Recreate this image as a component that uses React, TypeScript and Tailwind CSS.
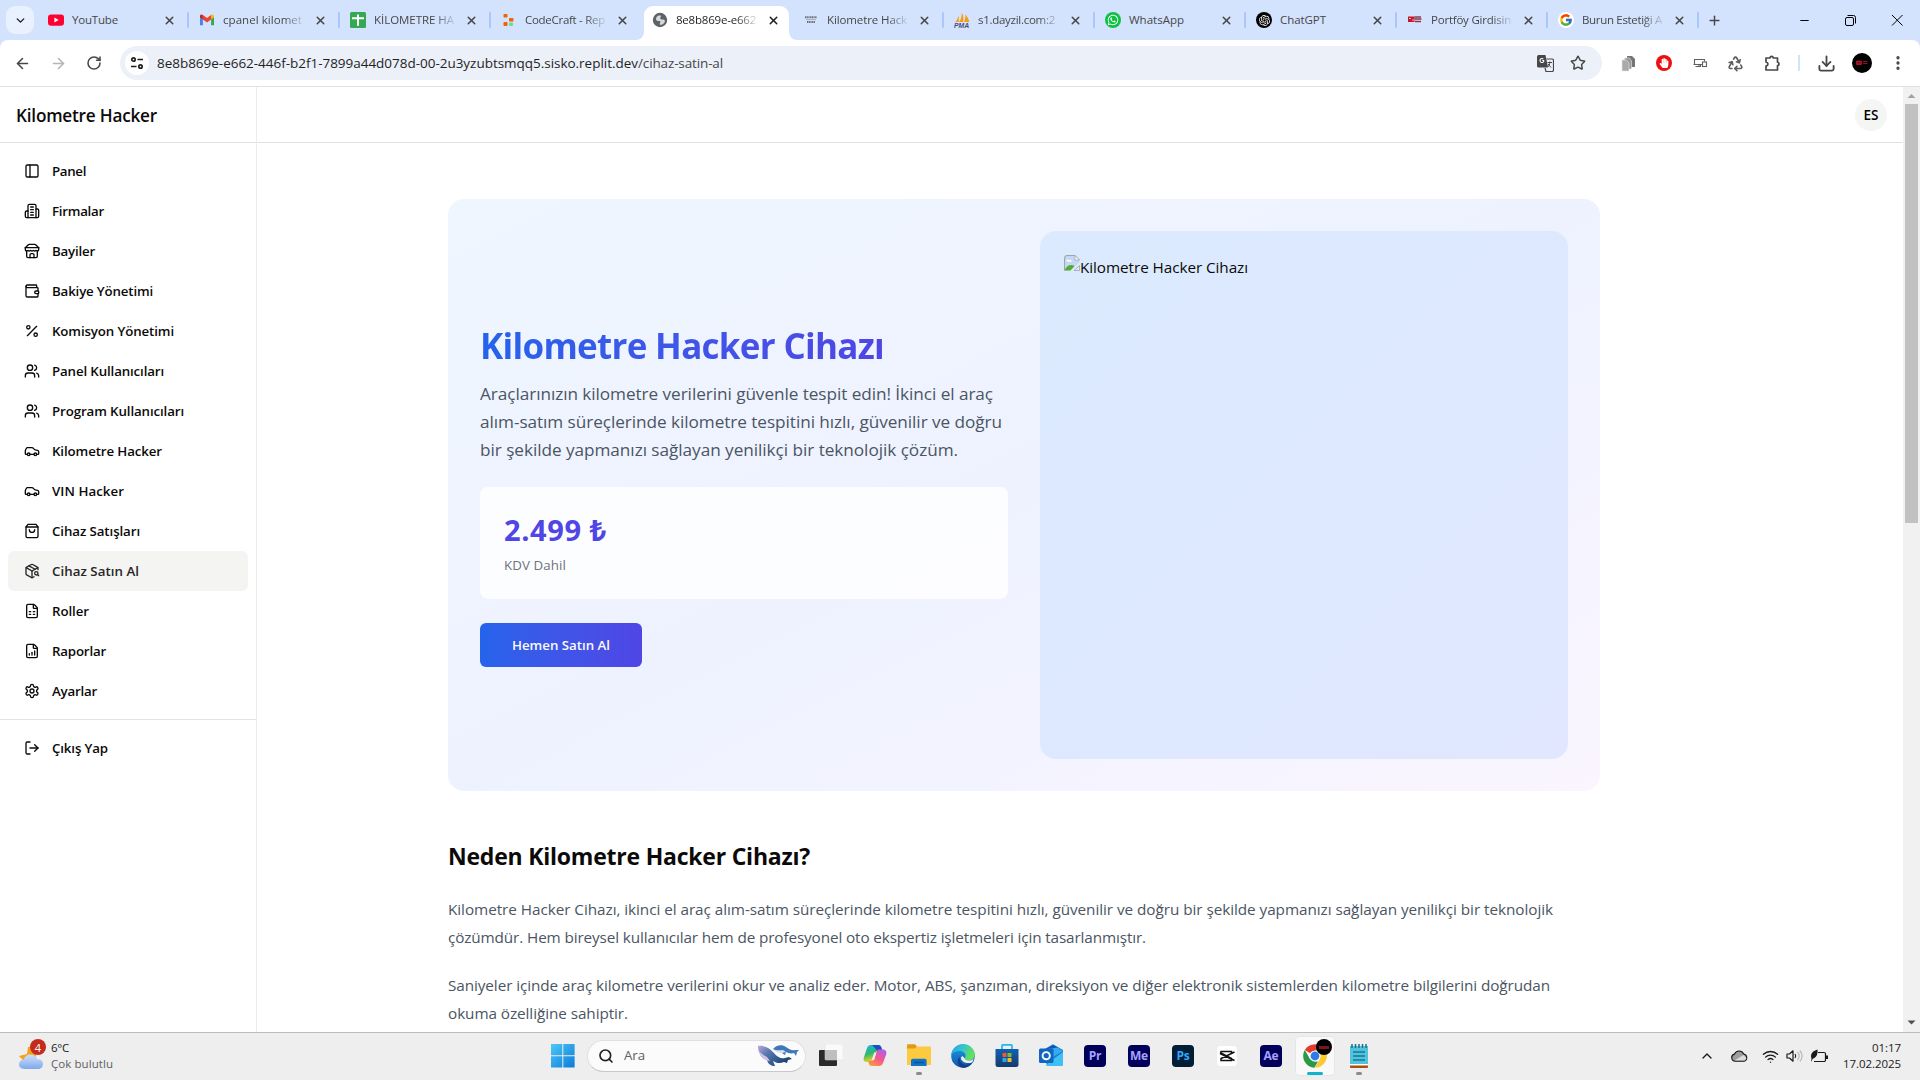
import React, { useLayoutEffect, useRef } from "react";
import {
  ArrowLeft, ArrowRight, RotateCw, X, Plus, Minus, Star, Download, EllipsisVertical, ChevronDown, ChevronUp,
  PanelLeft, Wallet, Percent, Users, Car, PackageSearch, FileSpreadsheet, FileChartColumnIncreasing,
  LogOut, Search, Wifi, Recycle,
} from "lucide-react";
import { FcGoogle } from "react-icons/fc";
import { SiOpenai } from "react-icons/si";
import { FaWhatsapp, FaHandPaper } from "react-icons/fa";

/** One line of text whose tracking is adjusted so that it spans `w` pixels. */
function Fit({ w, className = "", children }: { w: number; className?: string; children: string }) {
  const ref = useRef<HTMLSpanElement>(null);
  useLayoutEffect(() => {
    const el = ref.current;
    if (!el) return;
    el.style.letterSpacing = "0px";
    const natural = el.getBoundingClientRect().width;
    el.style.letterSpacing = `${(w - natural) / children.length}px`;
  }, [w, children]);
  return <span ref={ref} className={`inline-block whitespace-nowrap ${className}`}>{children}</span>;
}

const stroke = { fill: "none", stroke: "currentColor", strokeWidth: 2, strokeLinecap: "round", strokeLinejoin: "round" } as const;

const StoreIcon = () => (
  <svg width="16" height="16" viewBox="0 0 24 24" {...stroke}>
    <path d="m2 7 4.41-4.41A2 2 0 0 1 7.83 2h8.34a2 2 0 0 1 1.42.59L22 7" />
    <path d="M4 12v8a2 2 0 0 0 2 2h12a2 2 0 0 0 2-2v-8" />
    <path d="M15 22v-4a2 2 0 0 0-2-2h-2a2 2 0 0 0-2 2v4" />
    <path d="M2 7h20" />
    <path d="M22 7v3a2 2 0 0 1-2 2a2.7 2.7 0 0 1-1.59-.63.7.7 0 0 0-.82 0A2.7 2.7 0 0 1 16 12a2.7 2.7 0 0 1-1.59-.63.7.7 0 0 0-.82 0A2.7 2.7 0 0 1 12 12a2.7 2.7 0 0 1-1.59-.63.7.7 0 0 0-.82 0A2.7 2.7 0 0 1 8 12a2.7 2.7 0 0 1-1.59-.63.7.7 0 0 0-.82 0A2.7 2.7 0 0 1 4 12a2 2 0 0 1-2-2V7" />
  </svg>
);
const BuildingIcon = () => (
  <svg width="16" height="16" viewBox="0 0 24 24" {...stroke}>
    <path d="M6 22V4a2 2 0 0 1 2-2h8a2 2 0 0 1 2 2v18Z" />
    <path d="M6 12H4a2 2 0 0 0-2 2v6a2 2 0 0 0 2 2h2" />
    <path d="M18 9h2a2 2 0 0 1 2 2v9a2 2 0 0 1-2 2h-2" />
    <path d="M10 6h4M10 10h4M10 14h4M10 18h4" />
  </svg>
);
const BagIcon = () => (
  <svg width="16" height="16" viewBox="0 0 24 24" {...stroke}>
    <path d="M6 2 3 6v14a2 2 0 0 0 2 2h14a2 2 0 0 0 2-2V6l-3-4Z" />
    <path d="M3 6h18M16 10a4 4 0 0 1-8 0" />
  </svg>
);
const GearIcon = () => (
  <svg width="16" height="16" viewBox="0 0 24 24" {...stroke}>
    <path d="M12.22 2h-.44a2 2 0 0 0-2 2v.18a2 2 0 0 1-1 1.73l-.43.25a2 2 0 0 1-2 0l-.15-.08a2 2 0 0 0-2.73.73l-.22.38a2 2 0 0 0 .73 2.73l.15.1a2 2 0 0 1 1 1.72v.51a2 2 0 0 1-1 1.74l-.15.09a2 2 0 0 0-.73 2.73l.22.38a2 2 0 0 0 2.73.73l.15-.08a2 2 0 0 1 2 0l.43.25a2 2 0 0 1 1 1.73V20a2 2 0 0 0 2 2h.44a2 2 0 0 0 2-2v-.18a2 2 0 0 1 1-1.73l.43-.25a2 2 0 0 1 2 0l.15.08a2 2 0 0 0 2.73-.73l.22-.39a2 2 0 0 0-.73-2.73l-.15-.08a2 2 0 0 1-1-1.74v-.5a2 2 0 0 1 1-1.74l.15-.09a2 2 0 0 0 .73-2.73l-.22-.38a2 2 0 0 0-2.73-.73l-.15.08a2 2 0 0 1-2 0l-.43-.25a2 2 0 0 1-1-1.73V4a2 2 0 0 0-2-2z" />
    <circle cx="12" cy="12" r="3" />
  </svg>
);

/* ---------- Browser tabs ---------- */

const YouTube = () => (
  <svg width="16" height="16" viewBox="0 0 16 16"><rect y="2.4" width="16" height="11.4" rx="3" fill="#ff0033" /><path d="M6.4 5.6v5l4.2-2.5z" fill="#fff" /></svg>
);
const Gmail = () => (
  <svg width="16" height="16" viewBox="0 0 16 16">
    <path d="M1 4v9.2h2.9V6.6z" fill="#4285f4" /><path d="M15 4v9.2h-2.9V6.6z" fill="#34a853" />
    <path d="M12.1 3.6v3.8L15 5.3V4c0-1.5-1.6-2.1-2.9-1.1z" fill="#fbbc04" />
    <path d="M1 4v1.3l2.9 2.1V3C2.6 1.9 1 2.5 1 4z" fill="#c5221f" />
    <path d="M3.9 3v4.4L8 10.4l4.1-3V3L8 6z" fill="#ea4335" />
  </svg>
);
const Sheets = () => (
  <svg width="16" height="16" viewBox="0 0 16 16"><rect width="16" height="16" rx="1.5" fill="#34a853" /><path d="M7 2.5h2v2.7h5v2H9v6.6H7V7.2H2v-2h5z" fill="#fff" /></svg>
);
const Replit = () => (
  <svg width="16" height="16" viewBox="0 0 16 16" fill="#f26207"><rect x="2.5" y="2" width="4" height="3.500" rx=".8" /><rect x="8" y="6" width="4.500" height="3.500" rx=".8" /><rect x="2.500" y="10" width="4" height="4" rx=".8" /><rect x="8" y="10.500" width="4" height="3.500" rx="1" fill="#6fdc8c" /></svg>
);
const Globe = () => (
  <svg width="16" height="16" viewBox="0 0 16 16"><circle cx="8" cy="8" r="7.2" fill="#5f6368" /><path d="M8 3.300c-2.600.3-4 2-4 3.600 0 1.800 1.600 2 3.300 2.200 1.200.1 1.500.7.9 1.500-.7.8-.5 1.800.2 2.300 2.700-.2 4.500-2 4.500-4.100-1-1.800-2.200-1-3.400-1.300-1.300-.4-1.700-1.300-.9-2.200.5-.6.300-1.500-.6-2z" fill="#d7dadd" /></svg>
);
const KiloHacker = () => (
  <svg width="16" height="16" viewBox="0 0 16 16" stroke="#6b6f76" strokeWidth="2"><path d="M2 5.200h12" strokeDasharray="1.200 .5" /><path d="M4 10h8.500" strokeDasharray="1.200 .5" /><path d="M3 7.600h10" stroke="#a9b2c2" strokeWidth="1" /></svg>
);
const Pma = () => (
  <svg width="16" height="16" viewBox="0 0 16 16">
    <path d="M1 10c2-1 3-4 3.300-6.500.8 2.200.8 4.500.2 6.500zM5 10c2-2 2.800-6 2.800-9.500 1.800 3 2 7 1.200 9.500zM10 10c1.200-2 1.500-4.500 1.200-7.500 2 2 3.800 5 4 7.500z" fill="#f89c0e" />
    <text x="0" y="15.800" fontSize="6.800" fontWeight="700" fontStyle="italic" fontFamily="Liberation Sans, sans-serif" fill="#4c4c7a">PMA</text>
  </svg>
);
const WhatsApp = () => (
  <span className="flex size-4 items-center justify-center rounded-full bg-[#0dc143] text-white"><FaWhatsapp size={12} /></span>
);
const ChatGpt = () => (
  <span className="flex size-4 items-center justify-center rounded-full bg-black text-white"><SiOpenai size={11} /></span>
);
const Portfolio = () => (
  <svg width="16" height="16" viewBox="0 0 16 16"><path d="M1 4.500h6.500v5.500H1z" fill="#c01830" /><path d="M7.500 5h6.500M7.500 7h7M8 9.500h6" stroke="#8c3b48" strokeWidth="1.300" /><path d="M2 6.500h2M5 8h2" stroke="#f5b8c0" /></svg>
);
const GoogleTab = () => (
  <span className="flex size-4 items-center justify-center rounded-full bg-white"><FcGoogle size={14} /></span>
);

const tabs = [
  { icon: <YouTube />, title: "YouTube", w: 46 },
  { icon: <Gmail />, title: "cpanel kilomet", w: 79, long: true },
  { icon: <Sheets />, title: "KİLOMETRE HA", w: 80, long: true },
  { icon: <Replit />, title: "CodeCraft - Rep", w: 80, long: true },
  { icon: <Globe />, title: "8e8b869e-e662", w: 80, long: true, active: true },
  { icon: <KiloHacker />, title: "Kilometre Hack", w: 80, long: true },
  { icon: <Pma />, title: "s1.dayzil.com:2", w: 77, long: true },
  { icon: <WhatsApp />, title: "WhatsApp", w: 55 },
  { icon: <ChatGpt />, title: "ChatGPT", w: 46 },
  { icon: <Portfolio />, title: "Portföy Girdisin", w: 80, long: true },
  { icon: <GoogleTab />, title: "Burun Estetiği A", w: 80, long: true },
];

function TabStrip() {
  return (
    <div className="flex h-10 items-start bg-[#d3e2fd] pt-1.5 pl-1.5">
      <button className="flex h-7 w-7 items-center justify-center rounded-[9px] bg-[#e9f0fe] text-[#1f1f1f]"><ChevronDown size={13} strokeWidth={2.600} /></button>
      <div className="ml-1.5 flex">
        {tabs.map((t, i) => (
          <div
            key={t.title}
            className={
              t.active
                ? "relative flex h-[34px] w-[151px] shrink-0 items-start before:absolute before:top-0 before:bottom-0 before:left-0 before:w-[145px] before:rounded-t-[9px] before:bg-white"
                : "relative flex h-[34px] w-[151px] shrink-0 items-start"
            }
          >
            {t.active && (
              <svg className="absolute bottom-0 -left-2" width="161" height="8" viewBox="0 0 161 8" fill="#fff"><path d="M8 0v8H0a8 8 0 0 0 8-8zM153 0v8h8a8 8 0 0 1-8-8z" /></svg>
            )}
            <div className="relative flex h-7 w-full items-center pl-2">
              <span className="mr-2 block size-4">{t.icon}</span>
              <div className={t.long ? "flex w-20 [mask-image:linear-gradient(to_right,black_75%,rgba(0,0,0,0.15))]" : "flex w-20"}>
                <Fit w={t.w} className={t.active ? "text-[11.500px] leading-5 text-[#1f1f1f]" : "text-[11.500px] leading-5 text-[#474747]"}>{t.title}</Fit>
              </div>
              <X size={13} strokeWidth={2.800} className={t.active ? "ml-[11px] text-[#1f1f1f]" : "ml-[11px] text-[#474747]"} />
              {!t.active && i !== 3 && <span className="absolute top-[6px] left-[147px] h-4 w-[2px] rounded bg-[#a8c7fa]" />}
            </div>
          </div>
        ))}
      </div>
      <div className="ml-[6px] flex h-7 items-center text-[#474747]"><Plus size={15} strokeWidth={2.300} /></div>
      <div className="ml-auto flex h-7 items-center gap-[33px] pr-[16px] text-black">
        <Minus size={13} strokeWidth={1.800} />
        <svg width="13" height="13" viewBox="0 0 13 13" fill="none" stroke="currentColor"><rect x="1.500" y="3.500" width="8" height="8" rx="1.500" /><path d="M3.500 1.500h6a2 2 0 0 1 2 2v6" /></svg>
        <svg width="14" height="13" viewBox="0 0 14 13" stroke="currentColor"><path d="m2 1 10.500 10.500M12.500 1 2 11.500" /></svg>
      </div>
    </div>
  );
}

function Toolbar() {
  return (
    <div className="bg-[#d3e2fd]">
      <div className="flex h-[47px] items-center rounded-t-lg border-b border-[#e1e3e1] bg-white pr-[13px] pl-[14px] text-[#474747]">
        <ArrowLeft size={17} strokeWidth={2.200} />
        <ArrowRight size={17} strokeWidth={2.200} className="ml-[19px] text-[#b5b5b5]" />
        <RotateCw size={16} strokeWidth={2.300} className="ml-[19px]" />
        <div className="ml-[18px] flex h-[34px] w-[1482px] items-center rounded-full bg-[#ecf0f9] pl-[5px]">
          <span className="flex size-6 items-center justify-center rounded-full bg-white text-[#1f1f1f]">
            <svg width="14" height="14" viewBox="0 0 14 14" fill="none" stroke="currentColor" strokeWidth="1.700"><circle cx="3.500" cy="3.500" r="1.700" /><path d="M7.500 3.500H13M1 10.500h5.500" /><circle cx="10.500" cy="10.500" r="1.700" /></svg>
          </span>
          <div className="ml-2 flex text-[13.500px] leading-5">
            <Fit w={481} className="text-[#1f1f1f]">8e8b869e-e662-446f-b2f1-7899a44d078d-00-2u3yzubtsmqq5.sisko.replit.dev</Fit>
            <Fit w={85} className="text-[#474747]">/cihaz-satin-al</Fit>
          </div>
          <div className="ml-auto flex items-center gap-[16px] pr-4">
            <svg width="17" height="17" viewBox="0 0 17 17"><path d="M1 0h7.500l2.500 12.500H1.500A1.500 1.500 0 0 1 0 11V1.500z" fill="#474747" /><path d="M9.500 4H15a1.500 1.500 0 0 1 1.500 1.500v9.500a1.500 1.500 0 0 1-1.500 1.500H9l-1-3.500" fill="none" stroke="#474747" strokeWidth="1.200" /><path d="M7 5.500H5.200M7 5.500A2 2 0 1 1 6.300 4" fill="none" stroke="#fff" strokeWidth="1.100" /><path d="M10.500 7.500h4.500M12.800 6.500v1c0 2-1 3.500-2 4.500M11 9l3 3.500" fill="none" stroke="#474747" /></svg>
            <Star size={16} strokeWidth={2.200} />
          </div>
        </div>
        <div className="ml-auto flex items-center">
          <svg width="16" height="17" viewBox="0 0 16 17"><path d="M6 1h5l3 3v8H6z" fill="#747474" /><path d="M3.500 3h5l2 3v8h-7z" fill="#969696" stroke="#e8e8e8" strokeWidth=".6" /><path d="M1 5h4.500l2.500 3v8H1z" fill="#a9a9a9" stroke="#e8e8e8" strokeWidth=".6" /></svg>
          <span className="ml-[19px] flex size-4 items-center justify-center rounded-full bg-[#ed1010] text-white"><FaHandPaper size={10} /></span>
          <svg className="ml-[20px]" width="16" height="16" viewBox="0 0 16 16" fill="none" stroke="#606060" strokeWidth="1.100"><path d="M10 9.500H2.500v-5h10v2M1.500 9.500h7v2h-5" /><rect x="10.500" y="7" width="4" height="4.500" /><path d="M7 9.500v2.500" /></svg>
          <Recycle size={17} strokeWidth={2.300} className="ml-[19px] text-[#5c5c5c]" />
          <svg className="ml-[20px]" width="17" height="17" viewBox="0 0 17 17" fill="none" stroke="#474747" strokeWidth="1.700" strokeLinejoin="round"><path d="M2 3h4c.2-2.200 3-2.200 3.200 0h4.300v4.200c2 .2 2 3.200 0 3.400v4.400H2v-4c2.600-.4 2.600-3.600 0-4z" /></svg>
          <span className="ml-[17px] h-4 w-[2px] bg-[#d3e2fd]" />
          <Download size={19} strokeWidth={2.300} className="ml-[17px]" />
          <span className="ml-[16px] flex size-5 items-center justify-center rounded-full bg-black"><svg width="12" height="6" viewBox="0 0 12 6"><path d="M.5 1h5v3.500h-5zM7 1.500h4.500M7 3.500h4.500" fill="#8c1220" stroke="#b31b2c" strokeWidth=".8" /></svg></span>
          <EllipsisVertical size={18} strokeWidth={2.400} className="ml-[17px]" />
        </div>
      </div>
    </div>
  );
}

/* ---------- Application ---------- */

const nav = [
  { icon: <PanelLeft size={16} />, label: "Panel", w: 34 },
  { icon: <BuildingIcon />, label: "Firmalar", w: 52 },
  { icon: <StoreIcon />, label: "Bayiler", w: 43 },
  { icon: <Wallet size={16} />, label: "Bakiye Yönetimi", w: 101 },
  { icon: <Percent size={16} />, label: "Komisyon Yönetimi", w: 122 },
  { icon: <Users size={16} />, label: "Panel Kullanıcıları", w: 112 },
  { icon: <Users size={16} />, label: "Program Kullanıcıları", w: 132 },
  { icon: <Car size={16} />, label: "Kilometre Hacker", w: 110 },
  { icon: <Car size={16} />, label: "VIN Hacker", w: 72 },
  { icon: <BagIcon />, label: "Cihaz Satışları", w: 88 },
  { icon: <PackageSearch size={16} />, label: "Cihaz Satın Al", w: 87, active: true },
  { icon: <FileSpreadsheet size={16} />, label: "Roller", w: 37 },
  { icon: <FileChartColumnIncreasing size={16} />, label: "Raporlar", w: 54 },
  { icon: <GearIcon />, label: "Ayarlar", w: 45 },
];

function Sidebar() {
  return (
    <aside className="flex w-[257px] shrink-0 flex-col border-r border-[#ececec] text-[#0c0a09]">
      <div className="flex h-14 items-center border-b border-[#e2e2e2] pt-0.5 pl-4">
        <Fit w={141} className="text-[17.200px] font-semibold">Kilometre Hacker</Fit>
      </div>
      <nav className="flex flex-col px-2 py-2">
        {nav.map((n) => (
          <div key={n.label} className={n.active ? "flex h-10 items-center gap-3 rounded-md bg-[#f4f4f3] px-4 text-[#292524]" : "flex h-10 items-center gap-3 px-4"}>
            {n.icon}
            <Fit w={n.w} className="text-[13.300px] leading-5 font-semibold">{n.label}</Fit>
          </div>
        ))}
      </nav>
      <div className="border-t border-[#e2e2e2] px-2 py-2">
        <div className="flex h-10 items-center gap-3 px-4">
          <LogOut size={16} />
          <Fit w={56} className="text-[13.300px] leading-5 font-semibold">Çıkış Yap</Fit>
        </div>
      </div>
    </aside>
  );
}

function BrokenImage() {
  return (
    <svg width="16" height="16" viewBox="0 0 16 16">
      <path d="M.5 15.500V.5h10.500l4.500 4.500v2L6.500 15.500z" fill="#c4d7f5" />
      <path d="M.5 15.500V3a2.500 2.500 0 0 1 2.500-2.500h8L15.500 5" fill="none" stroke="#a3a3a3" />
      <path d="M11 .5V5h4.500z" fill="#fff" stroke="#a3a3a3" strokeWidth=".8" />
      <path d="M2.500 6.500c0-2 2-2.500 2.800-1.200C7 4.500 8 6 7.500 6.800z" fill="#fff" />
      <path d="M.5 15.500c1.500-5 6.500-7 10-4.500L6.500 15.500z" fill="#53ad35" />
      <path d="M10 15.500h5.500v-5z" fill="#dce8fb" stroke="#a3a3a3" strokeWidth=".8" />
    </svg>
  );
}

function Hero() {
  return (
    <section className="grid h-[592px] grid-cols-2 items-center gap-8 rounded-2xl bg-linear-to-br from-[#eff6ff] via-[#eef2ff] to-[#faf5ff] p-8">
      <div>
        <h1 className="flex h-11 items-center pt-0.5">
          <Fit w={404} className="bg-linear-to-r from-[#2563eb] to-[#4f46e5] bg-clip-text text-[35px] leading-10 font-bold text-transparent">Kilometre Hacker Cihazı</Fit>
        </h1>
        <p className="mt-[13px] flex flex-col items-start text-[17.200px] leading-7 text-[#4b5563]">
          <Fit w={513}>Araçlarınızın kilometre verilerini güvenle tespit edin! İkinci el araç</Fit>
          <Fit w={522}>alım-satım süreçlerinde kilometre tespitini hızlı, güvenilir ve doğru</Fit>
          <Fit w={478}>bir şekilde yapmanızı sağlayan yenilikçi bir teknolojik çözüm.</Fit>
        </p>
        <div className="mt-[23px] flex h-28 flex-col items-start rounded-lg bg-white/85 p-6 pt-[25px]">
          <Fit w={103} className="text-[29px] leading-9 font-bold text-[#4f46e5]">2.499 ₺</Fit>
          <Fit w={62} className="mt-[7px] text-[13.300px] leading-5 text-[#6b7280]">KDV Dahil</Fit>
        </div>
        <button className="mt-6 flex h-11 w-[162px] items-center justify-center rounded-md bg-linear-to-r from-[#2563eb] to-[#4f46e5]">
          <Fit w={98} className="text-[13.300px] leading-5 font-semibold text-[#fafaf9]">Hemen Satın Al</Fit>
        </button>
      </div>
      <div className="flex h-full items-start rounded-2xl bg-linear-to-br from-[#dbeafe] to-[#e0e7ff] p-6">
        <BrokenImage />
        <Fit w={168} className="text-[15.300px] leading-6 text-[#0c0a09]">Kilometre Hacker Cihazı</Fit>
      </div>
    </section>
  );
}

function ScrollBar() {
  return (
    <div className="flex w-[17px] shrink-0 flex-col items-center bg-[#f1f1f1]">
      <svg width="17" height="17" viewBox="0 0 17 17"><path d="M4.500 11h8l-4-4z" fill="#a3a3a3" /></svg>
      <div className="h-[419px] w-[13px] bg-[#c1c1c1]" />
      <svg className="mt-auto" width="17" height="19" viewBox="0 0 17 19"><path d="M4.500 7.500h8l-4 4z" fill="#505050" /></svg>
    </div>
  );
}

function Page() {
  return (
    <div className="flex h-[945px] overflow-hidden bg-white">
      <Sidebar />
      <div className="flex min-w-0 flex-1 flex-col">
        <header className="flex h-14 shrink-0 items-center justify-end border-b border-[#e2e2e2] pr-4">
          <span className="flex size-8 items-center justify-center rounded-full bg-[#f5f5f4] pt-px"><Fit w={15} className="text-[13.500px] font-semibold text-black">ES</Fit></span>
        </header>
        <main className="mt-14 ml-[191px] h-0 w-[1152px] flex-1">
          <Hero />
          <h2 className="mt-[47px] flex h-9 items-center"><Fit w={362} className="text-[23px] leading-8 font-bold text-[#0c0a09]">Neden Kilometre Hacker Cihazı?</Fit></h2>
          <div className="mt-[21px] flex flex-col items-start text-[15.300px] leading-7 text-[#4b5563]">
            <Fit w={1105}>Kilometre Hacker Cihazı, ikinci el araç alım-satım süreçlerinde kilometre tespitini hızlı, güvenilir ve doğru bir şekilde yapmanızı sağlayan yenilikçi bir teknolojik</Fit>
            <Fit w={698}>çözümdür. Hem bireysel kullanıcılar hem de profesyonel oto ekspertiz işletmeleri için tasarlanmıştır.</Fit>
            <Fit w={1102} className="mt-5">Saniyeler içinde araç kilometre verilerini okur ve analiz eder. Motor, ABS, şanzıman, direksiyon ve diğer elektronik sistemlerden kilometre bilgilerini doğrudan</Fit>
            <Fit w={180}>okuma özelliğine sahiptir.</Fit>
          </div>
        </main>
      </div>
      <ScrollBar />
    </div>
  );
}

/* ---------- Taskbar ---------- */

const Windows = () => (
  <svg width="24" height="24" viewBox="0 0 24 24"><defs><linearGradient id="win" x1="0" y1="0" x2="1" y2="1"><stop stopColor="#4cc8f8" /><stop offset="1" stopColor="#0b7ad8" /></linearGradient></defs><path d="M0 0h11.300v11.300H0zM12.300 0h11.300v11.300H12.300zM0 12.300h11.300v11.300H0zM12.300 12.300h11.300v11.300H12.300z" fill="url(#win)" /></svg>
);
const Whales = () => (
  <svg width="42" height="22" viewBox="0 0 42 22">
    <defs><linearGradient id="whale" x1="0" y1="0" x2="1" y2=".6"><stop stopColor="#b9a8dc" /><stop offset=".35" stopColor="#5a79b0" /><stop offset="1" stopColor="#16406e" /></linearGradient></defs>
    <path d="M1 1c6-1 12 2 16 7 3 4 7 6 11 5l4-1 3 2-4 1-1 3-3-1c-4 2-8 1-11-1l2 5c-4 0-7-2-8-6C5 14 1 8 1 1z" fill="url(#whale)" />
    <path d="M1 4c1 6 5 11 12 12l-3-4C6 10 3 8 1 4z" fill="#cfc2e8" />
    <path d="M16 4c3-4 9-5 13-2 3 2 6 4 9 3l4 0-2 2-1 4-2-3c-3 1-6 0-8-1l-1 3c-2-1-3-2-4-4-3 0-6 0-8-2z" fill="#3f79b5" />
    <path d="M16 4c3 2 7 1 10 1l3 2-4 1c-3 0-7-1-9-4z" fill="#d5def4" />
  </svg>
);
const TaskView = () => (
  <svg width="24" height="24" viewBox="0 0 24 24"><rect y="6" width="18" height="16" rx="1" fill="#2a2a2a" /><rect x="6" y="0" width="18" height="16" rx="1" fill="#fafafa" stroke="#dedede" strokeWidth=".5" /><rect x="6" y="6" width="12" height="10" fill="#bfbfbf" /></svg>
);
const Copilot = () => (
  <svg width="24" height="24" viewBox="0 0 24 24"><defs>
    <linearGradient id="cpA" x1="0" y1="0" x2=".3" y2="1"><stop stopColor="#16b5ef" /><stop offset=".55" stopColor="#2fb86d" /><stop offset="1" stopColor="#f0d520" /></linearGradient>
    <linearGradient id="cpB" x1=".8" y1="0" x2=".2" y2="1"><stop stopColor="#b35cf0" /><stop offset=".5" stopColor="#f2588d" /><stop offset="1" stopColor="#fb9a3c" /></linearGradient></defs>
    <path d="M8 1h7c2 0 3 1 3.500 3l1 3h-4c-2 0-3 1-3.500 3l-2 6c-.5 2-1.500 2-3 2H4c-3 0-4-2-3-5l3-9c.7-2 2-3 4-3z" fill="url(#cpA)" />
    <path d="M9 1h6c2 0 3 1 3.500 3l1 3.500h-5L12 4z" fill="#1a4fc4" />
    <path d="M16 22H9c-2 0-3-1-3.300-3l-.5-2H8c2 0 3-1 3.500-3l2-6c.5-2 1.500-2.500 3-2.500H20c3 0 4 2.500 3 5.500l-3 8c-.7 2-2 3-4 3z" fill="url(#cpB)" />
    <path d="M13.200 8.500h-2l-2.500 7.500h2.500z" fill="#ededed" />
  </svg>
);
const Explorer = () => (
  <svg width="24" height="24" viewBox="0 0 24 24"><path d="M0 1.500C0 .7.500.2 1.200.2H8l2 2.300-2 3H0z" fill="#e19b10" /><path d="M0 4.500h8l2-2h12.800c.7 0 1.200.5 1.200 1.200V21H0z" fill="#fcca3e" /><path d="M4 22v-5.500A1.800 1.800 0 0 1 5.800 14.700h12a1.800 1.800 0 0 1 1.800 1.800V22z" fill="#1173c8" /><path d="M7 18.500h10" stroke="#0a5393" strokeWidth="1.500" /></svg>
);
const Edge = () => (
  <svg width="24" height="24" viewBox="0 0 24 24"><defs>
    <linearGradient id="edA" x1="0" y1="0" x2="1" y2=".4"><stop stopColor="#1ca4e8" /><stop offset=".5" stopColor="#32c6cf" /><stop offset="1" stopColor="#66e05a" /></linearGradient>
    <linearGradient id="edB" x1="0" y1="0" x2="0" y2="1"><stop stopColor="#1f9de4" /><stop offset="1" stopColor="#0f55ae" /></linearGradient></defs>
    <circle cx="12" cy="12" r="11.800" fill="url(#edB)" />
    <path d="M.3 10.500C1.200 4.500 6 .2 12 .2c7 0 11.800 5 11.800 10.300 0 3.600-2.700 6-6 6-2.500 0-4.200-1-4.200-2 0-.7.9-1.200.9-3 0-2.300-2.500-4.500-6-4.500C5 7 1.800 8.300.3 10.500z" fill="url(#edA)" />
    <path d="M9 12.500c-1.500 4 2 8.800 7 8.300 2.200-.2 4-1.200 5.500-2.300-2 3.500-6 5.400-9.500 5.300C6.500 22.500 5 16 9 12.500z" fill="#123f86" />
    <path d="M13.800 14.500c0 1 1.500 2 4 2 2.200 0 4-.8 5-2.300l-1.500 4c-4 2-10 .5-11.300-3.500 0-1.200.5-2.200 1.500-2.700z" fill="#eee" />
  </svg>
);
const StoreApp = () => (
  <svg width="24" height="24" viewBox="0 0 24 24"><defs><linearGradient id="st" x1="0" y1="0" x2="0" y2="1"><stop stopColor="#0f62b4" /><stop offset="1" stopColor="#17396b" /></linearGradient></defs><path d="M7 6V1.800C7 1 7.300.8 8 .8h8c.7 0 1 .2 1 1V6" fill="none" stroke="#27b5ee" strokeWidth="1.700" /><path d="M.5 5h23v15.500a2.500 2.500 0 0 1-2.500 2.500H3a2.500 2.500 0 0 1-2.500-2.500z" fill="url(#st)" /><path d="M7.500 9h4v4h-4z" fill="#f2582a" /><path d="M12.500 9h4v4h-4z" fill="#80bb2a" /><path d="M7.500 14h4v4h-4z" fill="#26a9ea" /><path d="M12.500 14h4v4h-4z" fill="#fcba28" /></svg>
);
const Outlook = () => (
  <svg width="24" height="24" viewBox="0 0 24 24"><path d="M4 6 14 .3 24 6v14a2 2 0 0 1-2 2H8z" fill="#1380d8" /><path d="M5 6 14 1l9 5-9 6z" fill="#0c5ab0" /><path d="m9 5 10-1.500L24 7 14 13z" fill="#37a9ec" /><path d="M24 8v12a2 2 0 0 1-2 2H7l2-3z" fill="#3fc0f4" /><rect y="4.500" width="14.500" height="14.500" rx="1.500" fill="#1066c0" /><circle cx="7.200" cy="11.700" r="3.600" fill="none" stroke="#fff" strokeWidth="1.900" /></svg>
);
const Adobe = ({ t, ps }: { t: string; ps?: boolean }) => (
  <span className={ps ? "flex size-[22px] items-center justify-center rounded bg-[#001e36] text-[12px] leading-none font-bold tracking-tight text-[#31a8ff]" : "flex size-[22px] items-center justify-center rounded bg-[#00005b] text-[12px] leading-none font-bold tracking-tight text-[#a8a2ff]"}>{t}</span>
);
const CapCut = () => (
  <svg width="22" height="22" viewBox="0 0 22 22"><rect x=".5" y=".5" width="21" height="21" rx="3.500" fill="#fff" stroke="#e2e2e2" strokeWidth=".5" /><path d="M18.500 7 5 13.500v2h10.500v-2L4 7.500M18.500 15.500 4 8.500M5 8.500v-2h10.500v2" fill="none" stroke="#111" strokeWidth="1.500" /></svg>
);
const Chrome = () => (
  <svg width="24" height="24" viewBox="0 0 24 24"><path d="M12 12 1.800 6A11.800 11.800 0 0 1 22.200 6z" fill="#e33b2e" /><path d="M12 6h10.200a11.800 11.800 0 0 1-10.200 17.800l5-9z" fill="#fcc931" /><path d="M1.800 6 7 15l5 2.500 3 0-3.600 6.300A11.800 11.800 0 0 1 1.800 6z" fill="#2a9a47" /><circle cx="12" cy="12" r="5.600" fill="#fff" /><circle cx="12" cy="12" r="4.400" fill="#2f7bea" /></svg>
);
const Notepad = () => (
  <svg width="20" height="24" viewBox="0 0 20 24"><path d="M1 2h18v18H1z" fill="#53c3dc" /><path d="M3 0v4M6.500 0v4M10 0v4M13.500 0v4M17 0v4" stroke="#1c6f88" strokeWidth="1.500" /><path d="M4 8h12M4 12h12M4 16h12" stroke="#157a96" strokeWidth="1.500" /><path d="M1 20h18v1.500H1z" fill="#fff" /><path d="M1 21.500h18V23a1 1 0 0 1-1 1H2a1 1 0 0 1-1-1z" fill="#a8530c" /></svg>
);

function TaskItem({ children, running }: { children: React.ReactNode; running?: boolean }) {
  return (
    <div className="relative flex h-[46px] w-11 items-center justify-center">
      {children}
      {running && <span className="absolute bottom-1 h-[3px] w-1.5 rounded-full bg-[#8b8b8b]" />}
    </div>
  );
}

function Taskbar() {
  return (
    <div className="flex h-12 border-t border-[#bdbdbd] bg-[#eeeeee]">
      <div className="flex h-[46px] w-[541px] items-center pl-[18px]">
        <div className="relative">
          <svg width="27" height="30" viewBox="0 0 27 30"><defs><linearGradient id="cl" x1="0" y1="0" x2="0" y2="1"><stop stopColor="#cfe0fb" /><stop offset="1" stopColor="#7ea9ec" /></linearGradient></defs><path d="m10 6-1 7-8 2 5 5 12-4V5z" fill="#f5a11c" /><path d="M6.500 28C3 28 1 26 1 23.300c0-2.600 2-4.500 4.600-4.500C6.500 15.500 9 13.500 12.500 13.500c3.500 0 5.800 2 6.700 4.700 3.700-.3 5.800 1.800 5.800 4.800s-2.200 5-5 5z" fill="url(#cl)" /></svg>
          <span className="absolute -top-0.5 left-3 flex size-4 items-center justify-center rounded-full bg-[#c42b1c] text-[11px] leading-none text-white">4</span>
        </div>
        <div className="ml-[6px] flex flex-col items-start text-[11.500px] leading-4">
          <Fit w={18} className="text-[#1a1a1a]">6°C</Fit>
          <Fit w={62} className="text-[#606060]">Çok bulutlu</Fit>
        </div>
      </div>
      <div className="flex h-[46px] w-[265px] items-center pl-[10px]">
        <Windows />
        <div className="ml-3 flex h-8 w-[219px] items-center rounded-full border border-[#e0e0e0] border-b-[#c8c8c8] bg-[#fbfbfb] pr-1.5 pl-[10px]">
          <Search size={16} strokeWidth={2.500} className="text-[#222]" />
          <Fit w={21} className="ml-[10px] text-[13.300px] text-[#606060]">Ara</Fit>
          <span className="ml-auto"><Whales /></span>
        </div>
      </div>
      <div className="flex pl-[3px]">
        <TaskItem><TaskView /></TaskItem>
        <TaskItem><Copilot /></TaskItem>
        <TaskItem running><Explorer /></TaskItem>
        <TaskItem><Edge /></TaskItem>
        <TaskItem><StoreApp /></TaskItem>
        <TaskItem><Outlook /></TaskItem>
        <TaskItem><Adobe t="Pr" /></TaskItem>
        <TaskItem><Adobe t="Me" /></TaskItem>
        <TaskItem><Adobe t="Ps" ps /></TaskItem>
        <TaskItem><CapCut /></TaskItem>
        <TaskItem><Adobe t="Ae" /></TaskItem>
        <TaskItem>
          <span className="relative flex h-[38px] w-[38px] items-center justify-center rounded bg-[#f9f9f9] ring-1 ring-[#e6e6e6]">
            <Chrome />
            <span className="absolute top-[2px] right-[2px] flex size-4 items-center justify-center rounded-full bg-black"><span className="h-[3px] w-2.5 bg-[#7d1420]" /></span>
            <span className="absolute bottom-0 h-[3px] w-4 rounded-full bg-[#0cb5c9]" />
          </span>
        </TaskItem>
        <TaskItem running><Notepad /></TaskItem>
      </div>
      <div className="ml-auto flex h-[46px] items-center pr-[19px] text-[#1a1a1a]">
        <ChevronUp size={16} strokeWidth={2} />
        <svg className="ml-4" width="17" height="12" viewBox="0 0 17 12"><path d="M4.300 11.200A3.600 3.600 0 0 1 3.500 4.100 5 5 0 0 1 12.700 4 3.700 3.700 0 0 1 13 11.200z" fill="#9d9d9d" stroke="#1a1a1a" strokeWidth="1.200" /><path d="m3.500 10.500 9-5.500 3 3-1.500 2.500z" fill="#dcdcdc" /></svg>
        <Wifi size={17} strokeWidth={1.900} className="ml-[14px]" />
        <svg className="ml-[7px]" width="17" height="14" viewBox="0 0 17 14" fill="none" stroke="currentColor" strokeWidth="1.200" strokeLinejoin="round"><path d="M1 5h2.500L7 1.800v10.400L3.500 9H1z" /><path d="M9 5c.9 1.200.9 2.800 0 4" /><path d="M11.500 3c2 2.400 2 5.600 0 8M13.800 1.500c2.700 3.300 2.700 7.700 0 11" stroke="#b9b9b9" /></svg>
        <svg className="ml-[7px]" width="18" height="15" viewBox="0 0 18 15" fill="none" stroke="currentColor" strokeWidth="1.200"><path d="M8 3.500h6a1.500 1.500 0 0 1 1.500 1.500v6a1.500 1.500 0 0 1-1.500 1.500H4" /><path d="M16 7v2.500h1.500V7z" fill="currentColor" /><path d="M1.500 9.500C0 5 2.500 2 7.500.5 8 5.500 6 9 3 9.500L1 13z" fill="currentColor" stroke="none" /></svg>
        <div className="ml-[15px] flex flex-col items-end text-[11.500px] leading-4">
          <Fit w={29}>01:17</Fit>
          <Fit w={58}>17.02.2025</Fit>
        </div>
      </div>
    </div>
  );
}

export default function App() {
  return (
    <div className="h-[1080px] w-[1920px] overflow-hidden bg-white font-['Open_Sans','Noto_Sans',sans-serif]">
      <TabStrip />
      <Toolbar />
      <Page />
      <Taskbar />
    </div>
  );
}
